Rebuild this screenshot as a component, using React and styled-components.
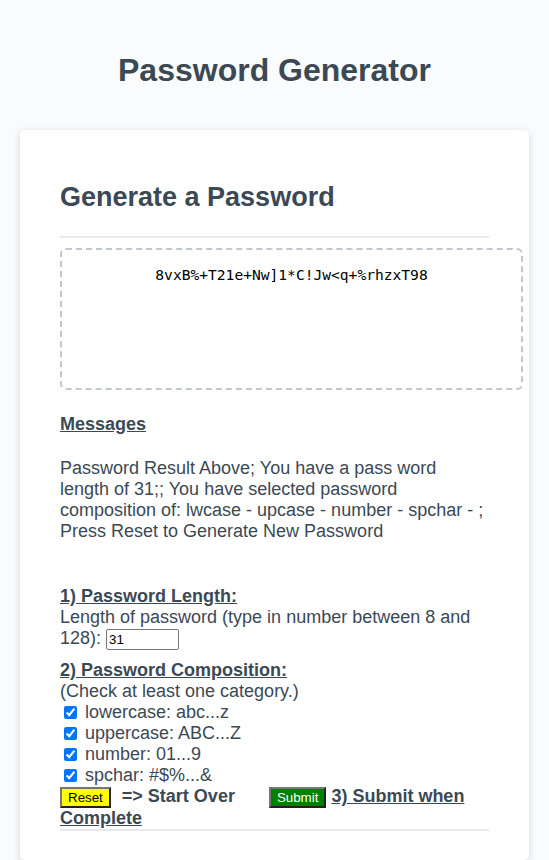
import styled, { createGlobalStyle } from "styled-components";

const GlobalStyle = createGlobalStyle`
  body {
    margin: 0;
    background-color: #f9fbfd;
    font-family: "Liberation Sans", Arial, sans-serif;
  }
`;

const Wrapper = styled.div`
  padding: 30px 20px 0;
`;

const Header = styled.header`
  text-align: center;
  padding-bottom: 20px;
  color: hsl(206, 17%, 28%);
`;

const Title = styled.h1`
  margin: 21.6px 0;
  font-size: 32px;
  font-weight: bold;
`;

const Card = styled.div`
  background-color: #fff;
  border-radius: 5px;
  box-shadow: rgba(0, 0, 0, 0.15) 0px 2px 8px 0px;
  color: hsl(206, 17%, 28%);
  font-size: 18px;
  padding: 30px 40px 29px;
`;

const CardTitle = styled.h2`
  margin: 22px 0 23px;
  font-size: 27px;
`;

const Divider = styled.div`
  height: 2px;
  background: #e7e9eb;
`;

const PasswordBox = styled.textarea`
  display: block;
  box-sizing: border-box;
  width: calc(100% + 34px);
  height: 142px;
  margin: 10px 0 0;
  padding: 16px 15px 0;
  border: 2px dashed #c0c7cf;
  border-radius: 6px;
  resize: none;
  overflow: hidden;
  text-align: center;
  font-family: "DejaVu Sans Mono", "Liberation Mono", monospace;
  font-size: 14.6px;
  color: #000;
  background: #fff;
  outline: none;
`;

const Label = styled.div`
  margin-top: ${({ $top }) => $top}px;
  font-weight: bold;
  text-decoration: underline;
`;

const Message = styled.p`
  margin: 23px 0 0;
`;

const Line = styled.div``;

const LengthInput = styled.input`
  box-sizing: border-box;
  width: 73px;
  height: 21px;
  padding: 1px 2px;
  border: 1px solid #767676;
  border-radius: 2px;
  font-family: "Liberation Sans", Arial, sans-serif;
  font-size: 13.33px;
  color: #000;
  vertical-align: baseline;
`;

const CheckRow = styled.label`
  display: flex;
  align-items: center;
  height: 21px;
`;

const CheckBox = styled.input`
  width: 13px;
  height: 13px;
  margin: 0 8px 0 4px;
  accent-color: #0075ff;
`;

const Actions = styled.div`
  font-weight: bold;
`;

const Button = styled.button`
  font-family: "Liberation Sans", Arial, sans-serif;
  font-size: 13.33px;
  font-weight: normal;
  padding: 1px 6px;
  border: 2px outset #767676;
  background-color: ${({ $bg }) => $bg};
  color: ${({ $fg }) => $fg};
  margin: 0 ${({ $gap }) => $gap}px 0 0;
  vertical-align: baseline;
`;

const Plain = styled.span`
  margin-right: ${({ $gap }) => $gap}px;
`;

const Underlined = styled.span`
  text-decoration: underline;
`;

const categories = [
  "lowercase: abc...z",
  "uppercase: ABC...Z",
  "number: 01...9",
  "spchar: #$%...&",
];

export default function App() {
  return (
    <>
      <GlobalStyle />
      <Wrapper>
        <Header>
          <Title>Password Generator</Title>
        </Header>
        <Card>
          <CardTitle>Generate a Password</CardTitle>
          <Divider />
          <PasswordBox readOnly value="8vxB%+T21e+Nw]1*C!Jw<q+%rhzxT98" />
          <Label $top={24}>Messages</Label>
          <Message>
            Password Result Above; You have a pass word length of 31;; You have
            selected password composition of: lwcase - upcase - number - spchar
            - ; Press Reset to Generate New Password
          </Message>
          <Label $top={44}>1) Password Length:</Label>
          <Line>
            Length of password (type in number between 8 and 128):{" "}
            <LengthInput type="text" defaultValue="31" />
          </Line>
          <Label $top={10}>2) Password Composition:</Label>
          <Line>(Check at least one category.)</Line>
          {categories.map((c) => (
            <CheckRow key={c}>
              <CheckBox type="checkbox" defaultChecked />
              {c}
            </CheckRow>
          ))}
          <Actions>
            <Button $bg="#ffff00" $fg="#000" $gap={11}>
              Reset
            </Button>
            <Plain $gap={34}>=&gt; Start Over</Plain>
            <Button $bg="#008000" $fg="#fff" $gap={5}>
              Submit
            </Button>
            <Underlined>3) Submit when Complete</Underlined>
          </Actions>
          <Divider />
        </Card>
      </Wrapper>
    </>
  );
}
